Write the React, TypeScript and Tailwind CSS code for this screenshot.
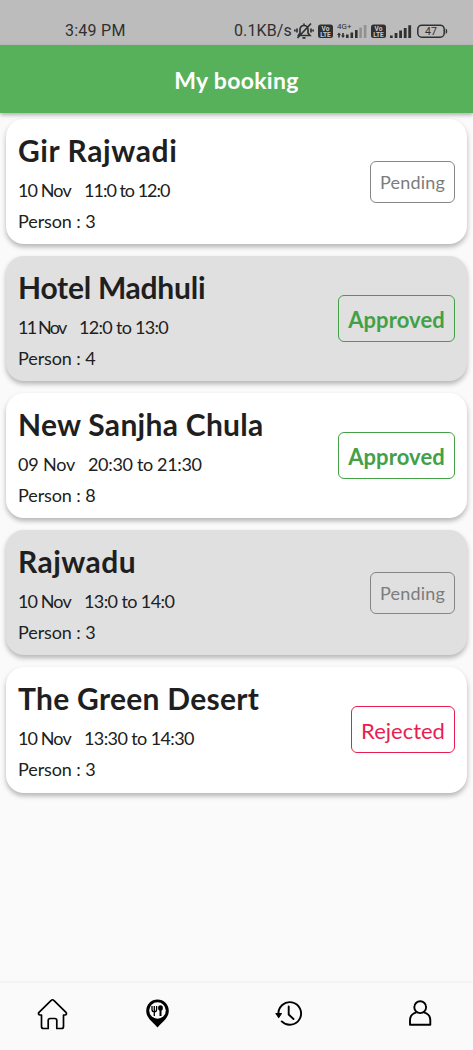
import clsx from 'clsx';

type Status = 'Pending' | 'Approved' | 'Rejected';

interface Booking {
    name: string;
    date: string;
    time: string;
    persons: number;
    status: Status;
    nameClass: string;
    dateClass: string;
    timeClass: string;
}

const bookings: Booking[] = [
    { name: 'Gir Rajwadi', date: '10 Nov', time: '11:0 to 12:0', persons: 3, status: 'Pending', nameClass: 'tracking-[0.6px]', dateClass: 'w-[66px] tracking-[-0.9px]', timeClass: 'tracking-[-1px]' },
    { name: 'Hotel Madhuli', date: '11 Nov', time: '12:0 to 13:0', persons: 4, status: 'Approved', nameClass: 'tracking-[-0.25px]', dateClass: 'w-[61px] tracking-[-1.8px]', timeClass: 'tracking-[-0.7px]' },
    { name: 'New Sanjha Chula', date: '09 Nov', time: '20:30 to 21:30', persons: 8, status: 'Approved', nameClass: 'tracking-[0.28px]', dateClass: 'w-[70px] tracking-[-0.2px]', timeClass: 'tracking-[-0.33px]' },
    { name: 'Rajwadu', date: '10 Nov', time: '13:0 to 14:0', persons: 3, status: 'Pending', nameClass: 'tracking-[0.45px]', dateClass: 'w-[66px] tracking-[-0.9px]', timeClass: 'tracking-[-0.6px]' },
    { name: 'The Green Desert', date: '10 Nov', time: '13:30 to 14:30', persons: 3, status: 'Rejected', nameClass: 'tracking-[0.28px]', dateClass: 'w-[66px] tracking-[-0.9px]', timeClass: 'tracking-[-0.6px]' },
];

const badgeStyles: Record<Status, string> = {
    Pending: 'h-[42px] w-[85px] border-[#858585] text-[18px] tracking-[0.2px] text-[#7c7c7c]',
    Approved: 'h-[47px] w-[117px] border-[#43a047] text-[22px] font-bold tracking-[0.1px] text-[#43a047]',
    Rejected: 'h-[47px] w-[104px] border-[#e91e50] text-[22px] text-[#e91e50]',
};

function StatusBar() {
    return (
        <div className="flex h-[45px] shrink-0 items-end justify-between bg-[#bcbcbc] pr-[25px] pb-[5px] pl-[65px] font-['Roboto',sans-serif] text-[#303030]">
            <span className="text-[16px] leading-[18px] tracking-[0.25px]">3:49 PM</span>
            <div className="flex h-[18px] items-center">
                <span className="w-[60px] text-[16px] leading-[18px] tracking-[0.1px] whitespace-nowrap">0.1KB/s</span>
                <MutedBell />
                <VoLte />
                <svg className="ml-[4px]" width="30" height="18" viewBox="0 0 30 18" fill="currentColor">
                    <text x="0" y="7" fontSize="8" fontFamily="Roboto">4G+</text>
                    <path d="M2 10.500 4 13H2.800v2.500H1.200V13H0zM6 16 4 13.500h1.200V11h1.600v2.500H8zM9 12.500h2.600V16H9zM13.500 10.500h2.600V16h-2.600zM18 8h2.600v8H18z" />
                    <path opacity=".3" d="M22.300 5.500h2.600V16h-2.600zM26.800 3h2.600v13h-2.600z" />
                </svg>
                <VoLte />
                <svg className="ml-[4px]" width="22" height="18" viewBox="0 0 22 18" fill="currentColor">
                    <path d="M0 13.500h2.700V16H0zM4.600 11h2.800v5H4.600zM9.200 8.500H12V16H9.200zM13.800 6h2.800v10h-2.800zM18.300 3.300h2.800V16h-2.800z" />
                </svg>
                <svg className="ml-[5px]" width="31" height="18" viewBox="0 0 31 18" fill="none">
                    <rect x=".8" y="3.200" width="26.400" height="12" rx="4" stroke="currentColor" strokeWidth="1.500" />
                    <path d="M28.700 6.500v5.500c2-.7 2-4.800 0-5.500z" fill="currentColor" />
                    <text x="14" y="13" fontSize="10.500" fontFamily="Roboto" textAnchor="middle" fill="currentColor">47</text>
                </svg>
            </div>
        </div>
    );
}

function MutedBell() {
    return (
        <svg width="20" height="18" viewBox="0 0 20 18" fill="none" stroke="currentColor" strokeWidth="1.700">
            <path d="M4.500 13.500h11.500L14 11V7.500a4 4 0 0 0-8 0V11zM8.500 15.800h3M10 3.500V1.500M17 1.500 3.500 16M3 6.500v4M.9 7.500v2M17 6.500v4M19.100 7.500v2" />
        </svg>
    );
}

function VoLte() {
    return (
        <svg className="ml-[4px]" width="15" height="18" viewBox="0 0 15 18">
            <rect y="2.500" width="15" height="13.500" rx="2.500" fill="currentColor" />
            <text x="7.500" y="8.800" fontSize="6.500" fontWeight="700" fontFamily="Roboto" textAnchor="middle" fill="#ccc">Vo</text>
            <text x="7.500" y="14.800" fontSize="6.500" fontWeight="700" fontFamily="Roboto" textAnchor="middle" fill="#ccc">LTE</text>
        </svg>
    );
}

function BookingCard({ booking, shaded }: { booking: Booking; shaded: boolean }) {
    const { name, date, time, persons, status, nameClass, dateClass, timeClass } = booking;

    return (
        <div
            className={clsx(
                'flex h-[125.2px] items-center justify-between rounded-[18px] px-[12px] shadow-[0_3px_5px_rgba(0,0,0,0.28)]',
                shaded ? 'bg-[#e0e0e0]' : 'bg-white'
            )}
        >
            <div className="h-full pt-[11px] whitespace-nowrap">
                <h2 className={clsx('text-[30px] leading-[40px] font-bold text-[#1f1f1f]', nameClass)}>{name}</h2>
                <div className="mt-[4.5px] flex text-[18px] leading-[31px]">
                    <span className={dateClass}>{date}</span>
                    <span className={timeClass}>{time}</span>
                </div>
                <p className="text-[18px] leading-[31px] tracking-[-0.1px]">Person : {persons}</p>
            </div>
            <div className={clsx('flex items-center justify-center rounded-[6px] border-[1.4px] pt-px', badgeStyles[status])}>
                {status}
            </div>
        </div>
    );
}

function BottomNav() {
    return (
        <nav className="h-[69px] shrink-0 border-t-2 border-[#f3f3f3] bg-[#fafafa] text-black">
            <div className="flex items-center pt-[14.500px] pl-[37px]">
                <svg width="31" height="32" viewBox="0 0 31 32" fill="none" stroke="currentColor" strokeWidth="1.700" strokeLinejoin="round" strokeLinecap="round">
                    <path d="M14.200 2.300a1.800 1.800 0 0 1 2.600 0L29 14.400c.9 1.200.3 2.600-1 2.600h-1.500v11.500a2 2 0 0 1-2 2h-4.700v-8a2 2 0 0 0-2-2h-4.600a2 2 0 0 0-2 2v8H6.500a2 2 0 0 1-2-2V17H3c-1.300 0-2-1.400-1-2.600z" />
                </svg>
                <svg className="ml-[77px]" width="25" height="32" viewBox="0 0 25 32">
                    <path d="M12.500 1.500A11.300 11.300 0 0 0 1.200 12.800C1.200 20.500 8.500 24.500 12.500 29.600c4-5.100 11.300-9.100 11.300-16.800A11.300 11.300 0 0 0 12.500 1.500z" fill="currentColor" />
                    <circle cx="12.500" cy="12.500" r="8.300" fill="#fafafa" />
                    <path d="M7 8v3.500a2.300 2.300 0 0 0 4.600 0V8M9.300 8v10" fill="none" stroke="currentColor" strokeWidth="1.300" />
                    <ellipse cx="15.500" cy="10" rx="2.400" ry="2.800" fill="currentColor" />
                    <path d="M15.500 11v7" stroke="currentColor" strokeWidth="2" />
                </svg>
                <svg className="ml-[105px]" width="28" height="32" viewBox="0 0 28 32" fill="none" stroke="currentColor" strokeWidth="1.900">
                    <path d="M3.500 16.500a11.300 11.300 0 1 1 3.200 6.900" strokeLinecap="round" />
                    <path d="M1 15.500h5.400l-2.700 4z" fill="currentColor" strokeWidth="1.200" strokeLinejoin="round" />
                    <path d="M13.700 8.500v8l4.800 4.500" strokeLinecap="round" />
                </svg>
                <svg className="ml-[105px]" width="26" height="32" viewBox="0 0 26 32" fill="none" stroke="currentColor" strokeWidth="1.900">
                    <circle cx="12.200" cy="9.200" r="5.900" />
                    <path d="M8.500 14.300c-4 1-6.500 4-6.500 8v4.400h20.300v-4.400c0-4-2.500-7-6.500-8" strokeLinejoin="round" />
                </svg>
            </div>
        </nav>
    );
}

export default function App() {
    return (
        <div className="flex h-[1050px] w-[473px] flex-col overflow-hidden bg-[#fafafa] font-['Lato',sans-serif] text-[#202020]">
            <StatusBar />
            <header className="relative flex h-[68px] shrink-0 items-center justify-center bg-[#57b15b] pt-[3px] text-[23px] font-bold tracking-[0.3px] text-white shadow-[0_2px_4px_rgba(0,0,0,0.3)]">
                <h1>My booking</h1>
            </header>
            <main className="flex flex-1 flex-col gap-[11.900px] px-[6px] pt-[6px]">
                {bookings.map((booking, i) => (
                    <BookingCard key={booking.name} booking={booking} shaded={i % 2 === 1} />
                ))}
            </main>
            <BottomNav />
        </div>
    );
}
